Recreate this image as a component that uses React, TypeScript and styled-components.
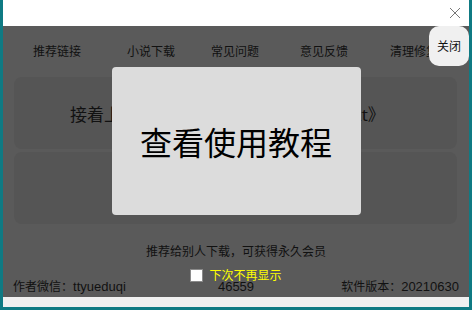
import React from "react";
import styled, { createGlobalStyle } from "styled-components";

const Global = createGlobalStyle`
  html, body { margin: 0; padding: 0; }
  body {
    width: 472px;
    height: 310px;
    overflow: hidden;
    background: #0f7a83;
    font-family: "Noto Sans", "Noto Sans CJK SC", sans-serif;
  }
`;

const Window = styled.div`
  position: relative;
  margin: 0 3px;
  width: 466px;
  height: 307px;
  display: flex;
  flex-direction: column;
  background: #f0f0f0;
`;

const TitleBar = styled.div`
  height: 26px;
  background: #ffffff;
  display: flex;
  align-items: center;
  justify-content: flex-end;
  padding-right: 8px;
`;

const Main = styled.div`
  position: relative;
  height: 271px;
  background: #5a5a5a;
  display: flex;
  flex-direction: column;
`;

const BottomStrip = styled.div`
  flex: 1;
  background: #f0f0f0;
`;

const Nav = styled.div`
  display: flex;
  padding: 18px 0 0 30px;
  height: 16px;
`;

const NavItem = styled.div<{ $ml: number }>`
  margin-left: ${(p) => p.$ml}px;
  font-size: 12px;
  line-height: 16px;
  color: #111;
  white-space: nowrap;
`;

const Cards = styled.div`
  display: flex;
  flex-direction: column;
  gap: 3px;
  margin: 17px 12px 0 11px;
`;

const Card = styled.div`
  height: 72px;
  border-radius: 8px;
  background: #555555;
  display: flex;
  align-items: center;
  justify-content: flex-start;
  padding-left: 56px;
  font-size: 17px;
  color: #111;
  white-space: nowrap;
`;

const Promo = styled.div`
  margin-top: 20px;
  text-align: center;
  font-size: 12px;
  line-height: 16px;
  color: #111;
`;

const Footer = styled.div`
  margin: 19px 10px 0 10px;
  display: grid;
  grid-template-columns: 1fr auto 1fr;
  font-size: 12px;
  line-height: 16px;
  color: #111;
`;

const FootCell = styled.div<{ $align: string }>`
  text-align: ${(p) => p.$align};
  white-space: nowrap;
`;

const Latin = styled.span`
  font-family: "Liberation Sans", sans-serif;
  font-size: 13px;
`;

const Overlay = styled.div`
  position: absolute;
  inset: 0;
  display: flex;
  flex-direction: column;
  align-items: center;
  padding-top: 41px;
`;

const Popup = styled.div`
  width: 249px;
  height: 148px;
  border-radius: 4px;
  background: #dcdcdc;
  display: flex;
  align-items: center;
  justify-content: center;
  font-size: 32px;
  color: #000;
  font-family: "Noto Sans CJK SC", sans-serif;
`;

const CheckRow = styled.label`
  margin-top: 54px;
  display: flex;
  align-items: center;
  gap: 6px;
  font-size: 12px;
  line-height: 13px;
  color: #ffff00;
`;

const Box = styled.span`
  width: 11px;
  height: 11px;
  background: #fff;
  border: 1px solid #8a8a8a;
`;

const CloseBtn = styled.div`
  position: absolute;
  top: 0;
  right: 0;
  width: 40px;
  height: 40px;
  border-radius: 10px;
  background: #f0f0f0;
  display: flex;
  align-items: center;
  justify-content: center;
  font-size: 12px;
  color: #111;
`;

const XIcon = () => (
  <svg width="12" height="12" viewBox="0 0 12 12">
    <path d="M1 1L11 11M11 1L1 11" stroke="#777" strokeWidth="1" fill="none" />
  </svg>
);

const navs: [string, number][] = [
  ["推荐链接", 0],
  ["小说下载", 46],
  ["常见问题", 36],
  ["意见反馈", 41],
  ["清理修复", 42],
];

export default function App() {
  return (
    <>
      <Global />
      <Window>
        <TitleBar>
          <XIcon />
        </TitleBar>
        <Main>
          <Nav>
            {navs.map(([t, ml]) => (
              <NavItem key={t} $ml={ml}>
                {t}
              </NavItem>
            ))}
          </Nav>
          <Cards>
            <Card>接着上次阅读《斗破苍穹全集完本版.txt》</Card>
            <Card />
          </Cards>
          <Promo>推荐给别人下载，可获得永久会员</Promo>
          <Footer>
            <FootCell $align="left">
              作者微信：<Latin>ttyueduqi</Latin>
            </FootCell>
            <FootCell $align="center">
              <Latin>46559</Latin>
            </FootCell>
            <FootCell $align="right">
              软件版本：<Latin>20210630</Latin>
            </FootCell>
          </Footer>
          <Overlay>
            <Popup>查看使用教程</Popup>
            <CheckRow>
              <Box />
              下次不再显示
            </CheckRow>
          </Overlay>
          <CloseBtn>关闭</CloseBtn>
        </Main>
        <BottomStrip />
      </Window>
    </>
  );
}
